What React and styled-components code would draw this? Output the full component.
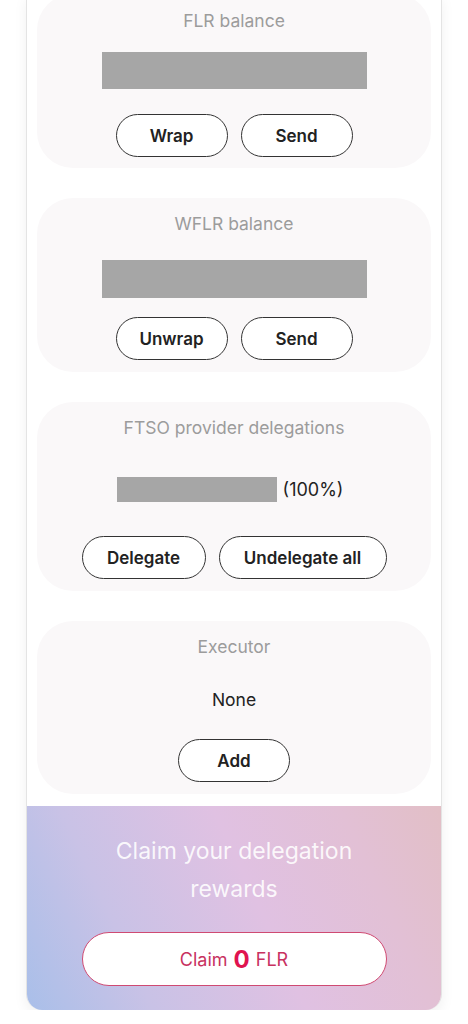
import React from "react";
import styled, { createGlobalStyle } from "styled-components";

const GlobalStyle = createGlobalStyle`
  html, body {
    margin: 0;
    padding: 0;
    background: #ffffff;
    font-family: Inter, "Noto Sans", "Liberation Sans", sans-serif;
    -webkit-font-smoothing: antialiased;
  }
`;

const Page = styled.div`
  width: 416px;
  margin: -6px auto 0;
  box-sizing: border-box;
  border-left: 1px solid #e4e4e4;
  border-right: 1px solid #e4e4e4;
  border-radius: 0 0 16px 16px;
  box-shadow: 0 6px 14px rgba(0, 0, 0, 0.06);
  background: #ffffff;
  overflow: hidden;
`;

const CardList = styled.div`
  display: flex;
  flex-direction: column;
  gap: 30px;
  padding: 0 10px 12px;
`;

const Card = styled.section`
  display: flex;
  flex-direction: column;
  align-items: center;
  background: #faf8f9;
  border-radius: 36px;
  padding: ${(p) => (p.$first ? "17px 0 11px" : "16px 0 12px")};
`;

const CardTitle = styled.h3`
  margin: 0;
  font-size: 17.5px;
  line-height: 20px;
  font-weight: 400;
  color: #9c9c9c;
`;

const HiddenBar = styled.div`
  width: ${(p) => p.$w}px;
  height: ${(p) => p.$h}px;
  background: #a6a6a6;
  margin-top: ${(p) => p.$top}px;
`;

const DelegationRow = styled.div`
  display: flex;
  align-items: center;
  gap: 6px;
  margin-top: 39px;
  margin-left: -8px;
  font-size: 18px;
  color: #222;
`;

const PlainValue = styled.div`
  margin-top: 33px;
  font-size: 17.5px;
  line-height: 20px;
  color: #222;
`;

const ButtonRow = styled.div`
  display: flex;
  gap: 13px;
  margin-top: ${(p) => p.$top}px;
`;

const PillButton = styled.button`
  width: ${(p) => p.$w}px;
  height: 43px;
  box-sizing: border-box;
  border: 1.5px solid #333;
  border-radius: 22px;
  background: #ffffff;
  font-family: inherit;
  font-size: 17px;
  font-weight: 600;
  color: #222;
  padding: 0;
`;

const ClaimPanel = styled.div`
  display: flex;
  flex-direction: column;
  align-items: center;
  padding: 26px 0 24px;
  background: linear-gradient(
    65deg,
    #a9bfe9 0%,
    #c9c2e6 25%,
    #e0c1e2 55%,
    #e2c0d5 80%,
    #e2bfc6 100%
  );
`;

const ClaimText = styled.p`
  margin: 0;
  width: 260px;
  text-align: center;
  font-size: 23px;
  line-height: 38px;
  color: rgba(255, 255, 255, 0.88);
`;

const ClaimButton = styled.button`
  margin-top: 24px;
  width: 305px;
  height: 54px;
  box-sizing: border-box;
  border: 1.5px solid #cf4a72;
  border-radius: 27px;
  background: #ffffff;
  font-family: inherit;
  font-size: 18px;
  color: #c8325f;
  display: flex;
  align-items: center;
  justify-content: center;
  gap: 6px;
`;

const ClaimAmount = styled.span`
  font-size: 24px;
  font-weight: 700;
  color: #e0134f;
`;

export default function App() {
  return (
    <>
      <GlobalStyle />
      <Page>
        <CardList>
          <Card $first>
            <CardTitle>FLR balance</CardTitle>
            <HiddenBar $w={265} $h={37} $top={21} />
            <ButtonRow $top={25}>
              <PillButton $w={112}>Wrap</PillButton>
              <PillButton $w={112}>Send</PillButton>
            </ButtonRow>
          </Card>
          <Card>
            <CardTitle>WFLR balance</CardTitle>
            <HiddenBar $w={265} $h={38} $top={26} />
            <ButtonRow $top={19}>
              <PillButton $w={112}>Unwrap</PillButton>
              <PillButton $w={112}>Send</PillButton>
            </ButtonRow>
          </Card>
          <Card>
            <CardTitle>FTSO provider delegations</CardTitle>
            <DelegationRow>
              <HiddenBar $w={160} $h={25} $top={0} />
              <span>(100%)</span>
            </DelegationRow>
            <ButtonRow $top={34}>
              <PillButton $w={124}>Delegate</PillButton>
              <PillButton $w={168}>Undelegate all</PillButton>
            </ButtonRow>
          </Card>
          <Card>
            <CardTitle>Executor</CardTitle>
            <PlainValue>None</PlainValue>
            <ButtonRow $top={29}>
              <PillButton $w={112}>Add</PillButton>
            </ButtonRow>
          </Card>
        </CardList>
        <ClaimPanel>
          <ClaimText>Claim your delegation rewards</ClaimText>
          <ClaimButton>
            Claim <ClaimAmount>0</ClaimAmount> FLR
          </ClaimButton>
        </ClaimPanel>
      </Page>
    </>
  );
}
